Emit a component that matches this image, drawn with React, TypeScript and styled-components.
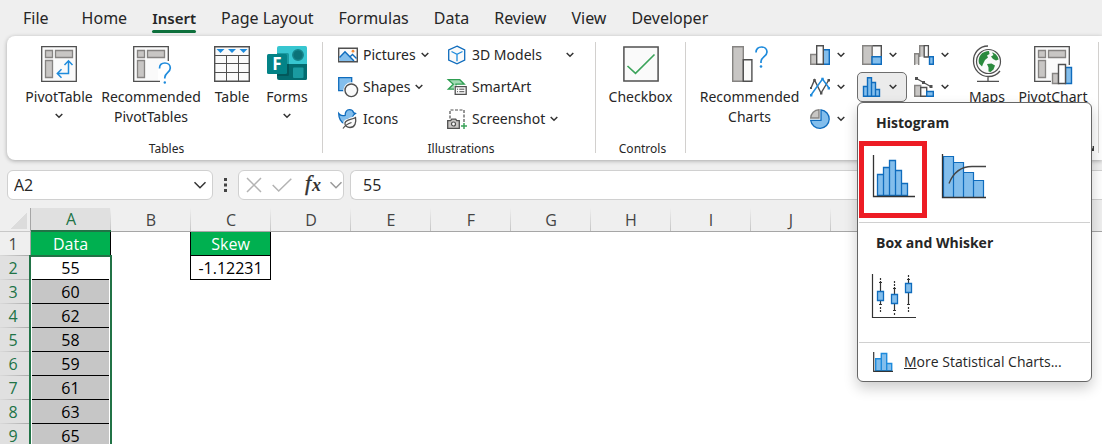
import React from "react";
import styled, { createGlobalStyle } from "styled-components";

const ui = `"Noto Sans", "Open Sans", sans-serif`;
const plain = `"Open Sans", "Noto Sans", sans-serif`;
const ink = "#262626";
const green = "#217346";
const line = "#505050";
const greyFill = "#c8c6c4";
const greyLine = "#868482";
const blueFill = "#83beec";
const blueLine = "#0f6cbd";
const blueStroke = "#1e8bdc";

const Global = createGlobalStyle`
  *, *::before, *::after { box-sizing: border-box; }
  html, body { margin: 0; background: #efefef; overflow: hidden; }
  body { font-family: ${ui}; font-size: 14px; color: ${ink}; }
  button, input { font: inherit; color: inherit; border: 0; background: none; padding: 0; margin: 0; }
  svg { display: block; flex: none; overflow: visible; }
`;

const Window = styled.div`
  height: 100vh;
  display: flex;
  flex-direction: column;
  overflow: hidden;
`;

const Tabs = styled.nav`
  display: flex;
  gap: 25px;
  height: 36px;
  flex: none;
  padding-left: 23px;
`;

const Tab = styled.button<{ $active?: boolean; $wide?: boolean }>`
  display: flex;
  flex-direction: column;
  justify-content: flex-end;
  font-size: ${(p) => (p.$active ? "15px" : "16px")};
  line-height: 20px;
  white-space: nowrap;
  margin-right: ${(p) => (p.$wide ? "8px" : "0")};
  font-weight: ${(p) => (p.$active ? 600 : 400)};
  &::after {
    content: "";
    align-self: stretch;
    height: 3px;
    margin: 2px 0 3px;
    border-radius: 2px;
    background: ${(p) => (p.$active ? "#0e703c" : "transparent")};
  }
`;

const Ribbon = styled.div`
  position: relative;
  z-index: 2;
  flex: none;
  display: flex;
  height: 124px;
  margin-left: 7px;
  padding-top: 4px;
  background: #fff;
  border-radius: 8px 0 0 8px;
  box-shadow: 0 1px 4px rgba(0, 0, 0, 0.3);
`;

const Group = styled.section<{ $width?: number }>`
  flex: ${(p) => (p.$width ? `0 0 ${p.$width}px` : "0 0 auto")};
  display: flex;
  flex-direction: column;
`;

const GroupBody = styled.div<{ $pad?: number; $center?: boolean }>`
  display: flex;
  align-items: flex-start;
  justify-content: ${(p) => (p.$center ? "center" : "flex-start")};
  height: 96px;
  padding-left: ${(p) => p.$pad || 0}px;
`;

const GroupLabel = styled.div`
  display: flex;
  align-items: center;
  justify-content: center;
  height: 24px;
  padding-left: 4px;
  font-size: 12px;
`;

const LaunchRow = styled(GroupLabel)`
  justify-content: flex-end;
  padding: 0 4px 2px 0;
`;

const Divider = styled.div`
  flex: none;
  width: 1px;
  margin: 2px 0 7px;
  background: #d2d0ce;
`;

const BigButton = styled.button<{ $width: number }>`
  display: flex;
  flex-direction: column;
  align-items: center;
  width: ${(p) => p.$width}px;
  flex: none;
  padding-top: 6px;
  font-size: 14px;
  line-height: 20px;
  white-space: nowrap;
`;

const BigIcon = styled.span`
  height: 36px;
  margin-bottom: 5px;
`;

const BigChevron = styled.span`
  padding-top: 6px;
`;

const CommandGrid = styled.div`
  display: grid;
  grid-template-columns: 109px 119px 20px;
  grid-template-rows: repeat(3, 30px);
  row-gap: 2px;
`;

const Command = styled.button`
  display: flex;
  align-items: center;
  gap: 5px;
  font-size: 14px;
  line-height: 20px;
  white-space: nowrap;
`;

const ChartGrid = styled.div`
  display: grid;
  grid-template-columns: repeat(3, 50px);
  grid-template-rows: repeat(3, 30px);
  gap: 2px;
`;

const ChartCell = styled.div`
  position: relative;
  display: flex;
`;

const ChartButton = styled.button<{ $open?: boolean }>`
  flex: 1;
  display: flex;
  align-items: center;
  gap: 7px;
  padding-left: 4px;
  border: 1px solid ${(p) => (p.$open ? "#6e6e6e" : "transparent")};
  border-radius: 5px;
  background: ${(p) => (p.$open ? "#ebebeb" : "none")};
`;

const Menu = styled.div`
  position: absolute;
  top: 100%;
  left: 0;
  z-index: 5;
  width: 235px;
  padding: 0 1px;
  background: #fff;
  border: 1px solid #666;
  border-radius: 6px;
  box-shadow: 0 6px 14px rgba(0, 0, 0, 0.2);
`;

const MenuTitle = styled.h3`
  margin: 0;
  padding: 10px 0 8px 17px;
  font-family: ${plain};
  font-size: 14px;
  line-height: 20px;
  font-weight: 700;
`;

const Gallery = styled.div`
  display: flex;
  gap: 2px;
  padding-bottom: 4px;
  border-bottom: 1px solid #d0d0d0;
`;

const GalleryItem = styled.button<{ $marked?: boolean }>`
  display: flex;
  align-items: flex-start;
  width: 68px;
  height: 77px;
  padding: ${(p) => (p.$marked ? "8px 0 0 8px" : "13px 0 0 13px")};
  border: ${(p) => (p.$marked ? "5px solid #ed1c24" : "0")};
`;

const MenuItem = styled.button`
  display: flex;
  align-items: center;
  gap: 11px;
  width: 100%;
  height: 38px;
  padding-left: 14px;
  font-family: ${plain};
  font-size: 14px;
  line-height: 20px;
  white-space: nowrap;
`;

const FormulaRow = styled.div`
  flex: none;
  display: flex;
  height: 48px;
  padding: 10px 0 8px 7px;
`;

const Field = styled.div<{ $width?: number }>`
  display: flex;
  align-items: center;
  min-width: 0;
  flex: ${(p) => (p.$width ? `0 0 ${p.$width}px` : "1 1 0")};
  border: 1px solid #d0d0d0;
  border-radius: 6px;
  background: #fff;
  font-family: ${plain};
  font-size: 16px;
`;

const TextBox = styled.input`
  flex: 1;
  min-width: 0;
  height: 26px;
  outline: none;
`;

const NameField = styled(Field)`
  padding: 0 6px;
`;

const FormulaActions = styled(Field)`
  justify-content: space-between;
  padding: 0 1px 0 7px;
  margin-right: 6px;
`;

const FormulaField = styled(Field)`
  padding-left: 12px;
  border-right: 0;
  border-radius: 6px 0 0 6px;
`;

const Dots = styled.span`
  width: 25px;
  display: flex;
  align-items: center;
  justify-content: center;
`;

const SheetArea = styled.div`
  flex: 1;
  min-height: 0;
  overflow: hidden;
  background: #fff;
`;

const Sheet = styled.table`
  table-layout: fixed;
  width: 100%;
  border-collapse: separate;
  border-spacing: 0;
  td, th { padding: 0; text-align: center; font-weight: 400; }
`;

const RowHeadCol = styled.col`
  width: 31px;
`;

const DataCol = styled.col`
  width: 80px;
`;

const ColHead = styled.th<{ $on?: boolean }>`
  height: 24px;
  font-family: ${plain};
  font-size: 16px;
  line-height: 20px;
  color: ${(p) => (p.$on ? green : "#444")};
  background:
    linear-gradient(to bottom, #efefef, #c4c4c4) right / 1px 100% no-repeat,
    ${(p) => (p.$on ? "#e0e0e0" : "#efefef")};
  border-bottom: ${(p) => (p.$on ? `2px solid ${green}` : "1px solid #a6a6a6")};
`;

const HeadFill = styled.td`
  background: #efefef;
  border-bottom: 1px solid #a6a6a6;
`;

const Corner = styled.td`
  background: #efefef;
  border-bottom: 1px solid #c8c8c8;
  border-right: 1px solid #a6a6a6;
`;

const CornerMark = styled.span`
  display: block;
  margin: 2px 3px 0 auto;
  width: 16px;
  height: 16px;
  background: linear-gradient(to bottom right, transparent 50%, #dcdcdc 50%);
`;

const RowHead = styled.th<{ $on?: boolean }>`
  height: 24px;
  font-family: ${plain};
  font-size: 16px;
  line-height: 20px;
  color: ${(p) => (p.$on ? green : "#444")};
  background:
    linear-gradient(to right, #dadada, #a9a9a9) bottom / 100% 1px no-repeat,
    ${(p) => (p.$on ? "#e0e0e0" : "#efefef")};
  border-right: 1px solid #a6a6a6;
  && { padding-right: 4px; }
`;

type Kind = "blank" | "head" | "active" | "picked" | "result";

const cellFill: Record<Kind, string> = {
  blank: "#fff",
  head: "#00b050",
  active: "#fff",
  picked: "#c6c6c6",
  result: "#fff",
};

const Cell = styled.td<{ $kind: Kind; $edge?: boolean }>`
  position: relative;
  height: 24px;
  font-family: ${plain};
  font-size: 16px;
  line-height: 20px;
  color: ${(p) => (p.$kind === "head" ? "#fff" : "#000")};
  background: ${(p) => cellFill[p.$kind]};
  border-right: ${(p) => (p.$kind !== "blank" || p.$edge ? "1px solid #000" : "0")};
  border-bottom: ${(p) => (p.$kind !== "blank" ? "1px solid #000" : "0")};
`;

const SelectionFrame = styled.span`
  position: absolute;
  z-index: 1;
  top: -1px;
  left: -2px;
  right: -2px;
  height: 400px;
  border: 2px solid ${green};
  box-shadow: inset 0 0 0 1px #fff;
  pointer-events: none;
`;

const Chevron = ({ big, color = "#333" }: { big?: boolean; color?: string }) =>
  big ? (
    <svg width="12" height="8" viewBox="0 0 12 8" fill="none" stroke={color} strokeWidth="1.5">
      <path d="M.5 1.2 6 6.7l5.500-5.500" />
    </svg>
  ) : (
    <svg width="8" height="6" viewBox="0 0 8 6" fill="none" stroke={color} strokeWidth="1.500">
      <path d="M.7 1 4 4.300 7.300 1" />
    </svg>
  );

const PivotFrame = ({ outline }: { outline: string }) => (
  <>
    <path d={outline} fill="#fafafa" stroke={line} strokeWidth="1.300" />
    <g fill={greyFill} stroke={greyLine} strokeWidth="1.300">
      <path d="M4.500 4.500h7v7h-7zM14.500 4.500h17v7h-17zM4.500 14.500h7v17h-7z" />
    </g>
  </>
);

const PivotTableIcon = () => (
  <svg width="36" height="36" viewBox="0 0 36 36" fill="none">
    <PivotFrame outline="M.7.7h34.600v34.600H.7z" />
    <path d="M27.500 15v12.500H16.500M23.500 19l4-4.200 4 4.200M20.500 23.300l-4.200 4.200 4.200 4.200" stroke={blueStroke} strokeWidth="1.500" />
  </svg>
);

const RecommendedPivotIcon = () => (
  <svg width="36" height="36" viewBox="0 0 36 36" fill="none">
    <rect width="36" height="36" fill="#fafafa" />
    <path d="M25 36V20q5-6 11-5v21z" fill="#fff" />
    <path d="M35.300 15V.7H.7v34.600H27" stroke={line} strokeWidth="1.300" />
    <path d="M4.500 4.500h7v7h-7zM14.500 4.500h17v7h-17zM4.500 14.500h7v17h-7z" fill={greyFill} stroke={greyLine} strokeWidth="1.300" />
    <path d="M26.500 22.500c0-3.500 2.300-5.500 5.400-5.500s5.400 2 5.400 5c0 4.500-5.500 4.700-5.500 9.500v1" stroke={blueStroke} strokeWidth="1.700" />
    <circle cx="31.800" cy="36.500" r="1.200" fill={blueStroke} />
  </svg>
);

const TableIcon = () => (
  <svg width="36" height="36" viewBox="0 0 36 36" fill="none">
    <path d="M.7.7h34.600v34.600H.7z" fill="#fafafa" stroke={line} strokeWidth="1.400" />
    <path d="M1 9.500h34M1 17.500h34M1 26.500h34M12.500 9.500V35M24.500 9.500V35" stroke={line} />
    <path d="M2.500 3h8l-4 4zM14 3h8l-4 4zM25.500 3h8l-4 4z" fill={blueStroke} />
  </svg>
);

const FormsIcon = () => (
  <svg width="40" height="34" viewBox="0 0 40 34">
    <path d="M12 0h26.500q1.500 0 1.500 1.500V18H10V2q0-2 2-2z" fill="#37c6d0" />
    <path d="M10 18h30v14.500q0 1.500-1.500 1.500H12q-2 0-2-2z" fill="#036c70" />
    <path d="M10 7h10.500q1.500 0 1.500 1.500V18H10z" fill="#1a9ba1" />
    <path d="M10 18h12v10.500q0 1.500-1.500 1.500H10z" fill="#02585b" />
    <circle cx="31" cy="9" r="5.200" fill="#0b7378" stroke="#15858b" strokeWidth="1.500" />
    <rect x="26" y="21.500" width="10.500" height="10.500" rx="1" fill="#1a9ba1" />
    <rect y="8" width="20" height="20" rx="1.500" fill="#038387" />
    <text x="10" y="24" textAnchor="middle" fill="#fff" fontFamily={plain} fontSize="17" fontWeight="700">F</text>
  </svg>
);

const CheckboxIcon = () => (
  <svg width="36" height="36" viewBox="0 0 36 36" fill="none">
    <path d="M.9.9h34.200v34.200H.9z" fill="#fafafa" stroke={line} strokeWidth="1.500" />
    <path d="m4.500 20 8 7.300L31.500 8.500" stroke="#3ba35a" strokeWidth="1.600" />
  </svg>
);

const RecommendedChartsIcon = () => (
  <svg width="36" height="36" viewBox="0 0 36 36" fill="none">
    <path d="M.7.7h10.600v34.600H.7z" fill={greyFill} stroke={greyLine} strokeWidth="1.400" />
    <path d="M11.300 13.700h8.600v21.600h-8.600z" fill="#fafafa" stroke={line} strokeWidth="1.400" />
    <path d="M24 6.500C24 3 26.300 1 29.500 1S35 3 35 6c0 4.500-6 4.700-6 9.500v1.500" stroke={blueStroke} strokeWidth="1.700" />
    <circle cx="29" cy="20.500" r="1.300" fill={blueStroke} />
  </svg>
);

const MapsIcon = () => (
  <svg width="30" height="36" viewBox="0 0 30 36" fill="none">
    <circle cx="16.500" cy="15.500" r="12" fill="#fafafa" stroke={line} strokeWidth="1.200" />
    <path d="M8.500 9c2-3 6-4 8.500-4l.5 3-2.500 1.500 1 2-3 2.500-2 4-1 2.500-3-3c-.8-3-.3-5.800 1.500-8.500zM20 6.500c3.500.7 6 3.500 6.600 7l-2.600 1-3-1.500-2-2.500 2.500-1.500zM15 18l4.500-.5 3.500 2-1.500 4-3 2.500-2-.5v-4z" fill="#2b8a3e" />
    <path d="M16 0C7 0 1.500 7 1.500 15c0 9 7 15.500 15 15.500 5 0 9-2.300 11.500-5.500M16 30.500v4.500M5 35.300h22" stroke={line} strokeWidth="1.300" />
  </svg>
);

const PivotChartIcon = () => (
  <svg width="38" height="38" viewBox="0 0 38 38" fill="none">
    <PivotFrame outline="M17 35.300H.7V.7h34.600V19" />
    <path d="M18.500 27.500h6v10h-6z" fill={greyFill} stroke={greyLine} strokeWidth="1.400" />
    <path d="M31.500 21.500h6v16h-6z" fill={blueFill} stroke={blueLine} strokeWidth="1.400" />
    <path d="M24.500 18.500h7v19h-7z" fill="#fff" stroke={line} strokeWidth="1.400" />
  </svg>
);

const Small = ({ children }: { children: React.ReactNode }) => (
  <svg width="20" height="20" viewBox="0 0 20 20" fill="none">{children}</svg>
);

const PicturesIcon = () => (
  <Small>
    <path d="M.7 3.200h18.600v13.600H.7z" fill="#fafafa" stroke={line} strokeWidth="1.400" />
    <path d="M1.500 12.500 7 6.800l9.300 9.200H1.500z" fill={blueFill} />
    <path d="M1.500 12.500 7 6.800l9 9.200M11.800 12l2.700-2.500 4 4" stroke={blueLine} strokeWidth="1.400" />
    <circle cx="15" cy="6.200" r="1.400" fill="#f08c3a" />
  </Small>
);

const ShapesIcon = () => (
  <Small>
    <path d="M.7.7h13v13H.7z" fill={blueFill} stroke={blueLine} strokeWidth="1.300" />
    <circle cx="13.300" cy="13.300" r="8" fill="#fff" />
    <circle cx="13.300" cy="13.300" r="6.300" fill="#fafafa" stroke={line} strokeWidth="1.400" />
  </Small>
);

const IconsIcon = () => (
  <Small>
    <path d="M.7 4.500c1.500 2 4 2.500 6.500 1.800C7 3 8.500.7 11.500.7c2.500 0 3.700 1.300 4 3l2 .8-2 1.500c-.3 2-1.500 3-2.500 3.500-3 0-5.500 2-6.500 5C3 13.500.7 9 .7 4.500z" fill={blueFill} stroke={blueLine} strokeWidth="1.300" />
    <path d="M17.500 8.500c1 5-.5 10-5.500 10-3 0-5.500-2-5-4.500.8-3.500 6-3 10.500-5.500z" fill="#fff" stroke="#fff" strokeWidth="3.500" />
    <path d="M17.500 8.500c1 5-.5 10-5.500 10-3 0-5.500-2-5-4.500.8-3.500 6-3 10.500-5.500zM5 19.500c2-3 5-5 8.500-6" fill="#fafafa" stroke={line} strokeWidth="1.300" />
  </Small>
);

const ModelsIcon = () => (
  <Small>
    <path d="M10 1.200 17.700 5v10L10 18.900 1.700 15V5z" fill="#fafafa" stroke={blueLine} strokeWidth="1.300" />
    <path d="M4.500 6.500 10 9.300l5.500-2.800M10 9.300v7" stroke={blueStroke} strokeWidth="1.300" />
  </Small>
);

const SmartArtIcon = () => (
  <Small>
    <path d="M1.300 2.700h11.500l4.500 4.500H9v5H1.300l5-5z" fill="#a3dab4" stroke="#2f9e52" strokeWidth="1.300" />
    <path d="M7 8.500h13V19H7z" fill="#fff" />
    <path d="M8.200 9.700h11v7.600h-11z" fill="#fafafa" stroke={line} strokeWidth="1.300" />
    <path d="M10 12.200h1M12.300 12.200h5M10 14.700h1M12.300 14.700h5" stroke={line} />
  </Small>
);

const ScreenshotIcon = () => (
  <Small>
    <path d="M3 14V1h14v12" stroke={line} strokeWidth="1.200" strokeDasharray="3 1.500" />
    <path d="M.7 11.700h3l1-1.500h4l1 1.500h2.600v7.600H.7z" fill={greyFill} stroke={line} strokeWidth="1.300" />
    <circle cx="6.500" cy="15" r="2" fill="#fff" stroke={line} strokeWidth="1.200" />
    <path d="M17 14v6M14 17h6" stroke="#3ba35a" strokeWidth="1.500" />
  </Small>
);

const ColumnIcon = () => (
  <Small>
    <path d="M.7 9.500h6v9.800h-6z" fill={greyFill} stroke={greyLine} strokeWidth="1.400" />
    <path d="M13.300 4.700h6v14.600h-6z" fill={blueFill} stroke={blueLine} strokeWidth="1.400" />
    <path d="M6.700.7h6.600v18.600H6.700z" fill="#fafafa" stroke={line} strokeWidth="1.400" />
  </Small>
);

const TreemapIcon = () => (
  <Small>
    <path d="M10 .7h9.300v11H10z" fill="#fafafa" stroke={line} strokeWidth="1.400" />
    <path d="M.7.7H10v18.600H.7z" fill={greyFill} stroke={greyLine} strokeWidth="1.400" />
    <path d="M10 11.700h9.300v7.600H10z" fill={blueFill} stroke={blueLine} strokeWidth="1.400" />
  </Small>
);

const WaterfallIcon = () => (
  <Small>
    <path d="M.7 8.700h4v10.600h-4z" fill={greyFill} />
    <path d="M5.700.7h4.500v11H5.700z" fill={greyFill} />
    <path d="M.7 20V8.700h4V20M5.700 12V.7h5" stroke={greyLine} strokeWidth="1.400" />
    <path d="M10.200.7h4.200V12h-4.200z" fill="#fafafa" stroke={line} strokeWidth="1.300" />
    <path d="M15.500 11.700h3.800v7.600h-3.800z" fill={blueFill} stroke={blueLine} strokeWidth="1.400" />
  </Small>
);

const LineIcon = () => (
  <Small>
    <path d="m1 11 3.500-8L11 16l7.500-12.500" stroke={line} strokeWidth="1.400" />
    <path d="M1 18 12.500 2l6.500 9" stroke={blueStroke} strokeWidth="1.500" />
    <path d="M0 10h2v2H0zM3.300 2h2.400v2.400H3.300zM10 15h2.400v2.400H10zM17.500 2H20v2.400h-2.500z" fill={line} />
    <path d="M0 17h2.400v2.400H0zM11.300.7h2.400v2.400h-2.400zM17.600 10H20v2.400h-2.400z" fill={blueStroke} />
  </Small>
);

const HistogramIcon = () => (
  <Small>
    <path d="M1.500 9.500h4v9.800h-4zM5.500.7h4v18.600h-4zM9.500 5.500h4v13.800h-4zM13.500 12.500h4v6.800h-4z" fill={blueFill} stroke={blueLine} strokeWidth="1.400" />
  </Small>
);

const ComboIcon = () => (
  <Small>
    <path d="M.7 8.500h6v10.800h-6z" fill={greyFill} stroke={greyLine} strokeWidth="1.400" />
    <path d="M6.700 10.500h6v8.800h-6z" fill="#fafafa" stroke={line} strokeWidth="1.400" />
    <path d="M12.700 14.500h6.600v4.800h-6.600z" fill={blueFill} stroke={blueLine} strokeWidth="1.400" />
    <path d="m2.500 1.500 7 4 8 4.500" stroke={line} strokeWidth="1.300" />
    <path d="M1 0h3v3H1zM8 4h3v3H8zM15.500 8h3v3h-3z" fill={line} />
  </Small>
);

const PieIcon = () => (
  <Small>
    <path d="M11 .8a9.300 9.300 0 1 1-10.300 10.500H11z" fill={blueFill} stroke={blueLine} strokeWidth="1.300" />
    <path d="M9 .7V9H.7A8.500 8.500 0 0 1 9 .7z" fill={greyFill} stroke={greyLine} strokeWidth="1.400" />
  </Small>
);

const HistogramChart = () => (
  <svg width="44" height="44" viewBox="0 0 44 44" fill="none">
    <path d="M5.500 20.500h6v21h-6zM11.500 13.500h6v28h-6zM17.500 6.500h6v35h-6zM23.500 16.500h6v25h-6zM29.500 29.500h6v12h-6z" fill={blueFill} stroke={blueLine} strokeWidth="1.300" />
    <path d="M1.500 1v41.500H43" stroke="#333" strokeWidth="1.300" />
  </svg>
);

const ParetoChart = () => (
  <svg width="44" height="44" viewBox="0 0 44 44" fill="none">
    <path d="M1.500 2.500h10v41h-10zM11.500 8.500h10v35h-10zM21.500 18.500h10v25h-10zM31.500 26.500h10v17h-10z" fill={blueFill} stroke={blueLine} strokeWidth="1.200" />
    <path d="M.5 0v43.500H44" stroke="#333" strokeWidth="1.300" />
    <path d="M7 29.500C12 17 20 12.500 30 12.500h14" stroke="#444" strokeWidth="1.300" />
  </svg>
);

const BoxChart = () => (
  <svg width="44" height="44" viewBox="0 0 44 44" fill="none">
    <g stroke="#333" strokeWidth="1.200">
      <path d="M.5 0v43.500H44M8.500 8.500v22M7 8.500h3M7 30.500h3M22.500 14.500v22M21 14.500h3M21 36.500h3M36.500 5.500v25M35 5.500h3M35 30.500h3" />
      <path d="M8.500 4v4M8.500 33v5M22.500 7v7M22.500 39v2M36.500 1v4M36.500 33v5" strokeDasharray="2 1" />
    </g>
    <path d="M5.500 17.500h6v9h-6zM19.500 20.500h6v9h-6zM33.500 9.500h6v9h-6z" fill={blueFill} stroke={blueLine} strokeWidth="1.300" />
  </svg>
);

const MoreChartsIcon = () => (
  <Small>
    <path d="M2.700 6.700h5.600v12.100H2.700zM8.300 1.500h5.400v17.300H8.300zM13.700 11.500h5v7.300h-5z" fill={blueFill} stroke={blueStroke} strokeWidth="1.400" />
    <path d="M.7 0v19.300H20" stroke="#333" strokeWidth="1.200" />
  </Small>
);

const chartButtons = [
  { name: "Column chart", icon: <ColumnIcon /> },
  { name: "Hierarchy chart", icon: <TreemapIcon /> },
  { name: "Waterfall chart", icon: <WaterfallIcon /> },
  { name: "Line chart", icon: <LineIcon /> },
  { name: "Statistic chart", icon: <HistogramIcon />, open: true },
  { name: "Combo chart", icon: <ComboIcon /> },
  { name: "Pie chart", icon: <PieIcon /> },
];

const tabs = ["File", "Home", "Insert", "Page Layout", "Formulas", "Data", "Review", "View", "Developer"];
const columns = ["A", "B", "C", "D", "E", "F", "G", "H", "I", "J", "K", "L", "M"];
const data = ["Data", "55", "60", "62", "58", "59", "61", "63", "65"];
const skew = ["Skew", "-1.12231"];

const cellAt = (col: string, row: number): { kind: Kind; text: string } => {
  if (col === "A") return { kind: row === 0 ? "head" : row === 1 ? "active" : "picked", text: data[row] };
  if (col === "C" && row < 2) return { kind: row === 0 ? "head" : "result", text: skew[row] };
  return { kind: "blank", text: "" };
};

const StatisticMenu = () => (
  <Menu>
    <MenuTitle>Histogram</MenuTitle>
    <Gallery>
      <GalleryItem $marked aria-label="Histogram"><HistogramChart /></GalleryItem>
      <GalleryItem aria-label="Pareto"><ParetoChart /></GalleryItem>
    </Gallery>
    <MenuTitle>Box and Whisker</MenuTitle>
    <Gallery>
      <GalleryItem aria-label="Box and Whisker"><BoxChart /></GalleryItem>
    </Gallery>
    <MenuItem>
      <MoreChartsIcon />
      <span><u>M</u>ore Statistical Charts...</span>
    </MenuItem>
  </Menu>
);

export default function App() {
  return (
    <Window>
      <Global />
      <Tabs>
        {tabs.map((t) => (
          <Tab key={t} $active={t === "Insert"} $wide={t === "File"}>{t}</Tab>
        ))}
      </Tabs>

      <Ribbon>
        <Group $width={315}>
          <GroupBody $pad={12}>
            <BigButton $width={80}>
              <BigIcon><PivotTableIcon /></BigIcon>
              PivotTable
              <BigChevron><Chevron /></BigChevron>
            </BigButton>
            <BigButton $width={104}>
              <BigIcon><RecommendedPivotIcon /></BigIcon>
              Recommended<br />PivotTables
            </BigButton>
            <BigButton $width={58}>
              <BigIcon><TableIcon /></BigIcon>
              Table
            </BigButton>
            <BigButton $width={52}>
              <BigIcon><FormsIcon /></BigIcon>
              Forms
              <BigChevron><Chevron /></BigChevron>
            </BigButton>
          </GroupBody>
          <GroupLabel>Tables</GroupLabel>
        </Group>
        <Divider />
        <Group $width={272}>
          <GroupBody $pad={15}>
            <CommandGrid>
              <Command><PicturesIcon />Pictures<Chevron /></Command>
              <Command><ModelsIcon />3D Models</Command>
              <Command aria-label="3D Models options"><Chevron /></Command>
              <Command><ShapesIcon />Shapes<Chevron /></Command>
              <Command><SmartArtIcon />SmartArt</Command>
              <span />
              <Command><IconsIcon />Icons</Command>
              <Command><ScreenshotIcon />Screenshot<Chevron /></Command>
            </CommandGrid>
          </GroupBody>
          <GroupLabel>Illustrations</GroupLabel>
        </Group>
        <Divider />
        <Group $width={89}>
          <GroupBody $center>
            <BigButton $width={80}>
              <BigIcon><CheckboxIcon /></BigIcon>
              Checkbox
            </BigButton>
          </GroupBody>
          <GroupLabel>Controls</GroupLabel>
        </Group>
        <Divider />
        <Group $width={412}>
          <GroupBody $pad={8}>
            <BigButton $width={111}>
              <BigIcon><RecommendedChartsIcon /></BigIcon>
              Recommended<br />Charts
            </BigButton>
            <ChartGrid>
              {chartButtons.map((b) => (
                <ChartCell key={b.name}>
                  <ChartButton $open={b.open} aria-label={b.name}>
                    {b.icon}
                    <Chevron />
                  </ChartButton>
                  {b.open && <StatisticMenu />}
                </ChartCell>
              ))}
            </ChartGrid>
            <BigButton $width={56}>
              <BigIcon><MapsIcon /></BigIcon>
              Maps
            </BigButton>
            <BigButton $width={76}>
              <BigIcon><PivotChartIcon /></BigIcon>
              PivotChart
            </BigButton>
          </GroupBody>
          <LaunchRow>
            <svg width="8" height="8" viewBox="0 0 8 8" fill="none" stroke="#333" strokeWidth="1.300">
              <path d="M.6 6V.6H6M3 3l4 4M7.300 3v4.300H3" />
            </svg>
          </LaunchRow>
        </Group>
        <Divider />
      </Ribbon>

      <FormulaRow>
        <NameField $width={206}>
          <TextBox aria-label="Name box" defaultValue="A2" />
          <Chevron big />
        </NameField>
        <Dots>
          <svg width="3" height="14" viewBox="0 0 3 14" fill="#444">
            <path d="M0 0h3v3H0zM0 5.500h3v3H0zM0 11h3v3H0z" />
          </svg>
        </Dots>
        <FormulaActions $width={106}>
          <svg width="16" height="16" viewBox="0 0 16 16" fill="none" stroke="#b3b3b3" strokeWidth="1.500">
            <path d="m1 1 14 14M15 1 1 15" />
          </svg>
          <svg width="20" height="14" viewBox="0 0 20 14" fill="none" stroke="#b3b3b3" strokeWidth="1.500">
            <path d="m.7 7 6 6L19.300.7" />
          </svg>
          <svg width="18" height="20" viewBox="0 0 18 20">
            <text x="3" y="15" fill="#333" fontFamily='"Liberation Serif", serif' fontStyle="italic" fontSize="22" stroke="#333" strokeWidth=".4">f</text>
            <text x="10" y="16" fill="#333" fontFamily='"Liberation Serif", serif' fontStyle="italic" fontWeight="700" fontSize="18">x</text>
          </svg>
          <Chevron big color="#999" />
        </FormulaActions>
        <FormulaField>
          <TextBox aria-label="Formula bar" defaultValue="55" />
        </FormulaField>
      </FormulaRow>

      <SheetArea>
        <Sheet>
          <colgroup>
            <RowHeadCol />
            {columns.map((c) => <DataCol key={c} />)}
            <col />
          </colgroup>
          <thead>
            <tr>
              <Corner><CornerMark /></Corner>
              {columns.map((c) => <ColHead key={c} $on={c === "A"} scope="col">{c}</ColHead>)}
              <HeadFill />
            </tr>
          </thead>
          <tbody>
            {data.map((_, row) => (
              <tr key={row}>
                <RowHead $on={row > 0} scope="row">{row + 1}</RowHead>
                {columns.map((c) => {
                  const { kind, text } = cellAt(c, row);
                  return (
                    <Cell key={c} $kind={kind} $edge={c === "B" && row < 2}>
                      {text}
                      {kind === "active" && <SelectionFrame />}
                    </Cell>
                  );
                })}
                <td />
              </tr>
            ))}
          </tbody>
        </Sheet>
      </SheetArea>
    </Window>
  );
}
